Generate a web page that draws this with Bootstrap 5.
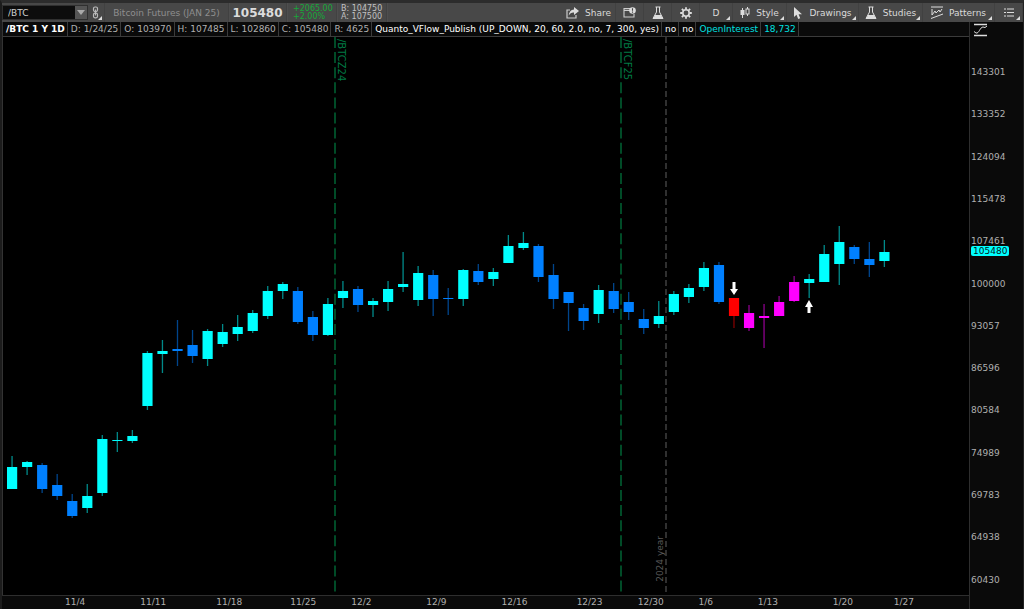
<!DOCTYPE html>
<html lang="en" data-bs-theme="dark">
<head>
<meta charset="utf-8">
<meta name="viewport" content="width=device-width, initial-scale=1">
<title>/BTC chart</title>
<link href="https://cdn.jsdelivr.net/npm/bootstrap@5.3.0/dist/css/bootstrap.min.css" rel="stylesheet">
<style>
body{background:#0a0a0a;color:#b0b0b0;font-family:"DejaVu Sans",sans-serif;font-size:9px;line-height:12px}
.app-shell{border-top:3px solid #2c2c2c;border-left:2px solid #1c1c1c;border-right:1px solid #222}
.tool-bar{height:19px;background:#484848}
.tool-cell{border-right:1px solid #414141;box-shadow:1px 0 0 #4e4e4e;height:19px}
.symbol-box{width:86px;height:15px;background:#0d0d0d;border:1px solid #303030}
.symbol-box .form-control{font-size:9px;line-height:12px;color:#d0d0d0;border-radius:0;min-height:0;padding:0 5px}
.drop-btn{width:14px;background:#555;border:0;padding:0}
.name-cell{width:124px;color:#8e8e8e}
.last-cell{width:58px;font-size:12px;color:#dcdcdc}
.chg-cell{width:50px;font-size:8px;line-height:8px;color:#16a839;padding-left:6px}
.ba-cell{width:50px;font-size:8px;line-height:8px;color:#c0c0c0}
.tool-btn{height:19px;border:0;border-right:1px solid #414141;border-radius:0;background:#484848;color:#dadada;font-size:9px;line-height:12px;padding:0;position:relative;gap:6px}
.tool-btn:hover{background:#555;color:#fff}
.link-btn{width:17px}
.has-menu::after{content:"";position:absolute;right:2px;bottom:2px;border-left:4px solid transparent;border-bottom:4px solid #ddd}
.w-icon{width:28px}.w-mid{width:54px}.w-day{width:33px}.w-wide{width:72px}.w-study{width:64px}
.info-row{height:15px;border-bottom:1px solid #3b3b3b;border-left:1px solid #333}
.info-row span{padding:0 2px 0 3px;line-height:15px;border-right:1px solid #3b3b3b;white-space:nowrap;height:14px}
.price-side{width:54px;border-left:1px solid #2e2e2e}
.scale-btn{padding:1px 4px}
.plot{background:#000;border-left:1px solid #333}
.date-row{height:14px;border-top:1px solid #2e2e2e}
.tick-x{position:absolute;top:0;transform:translateX(-50%)}
.tick-y{position:absolute;left:1px;transform:translateY(-50%)}
.last-tag{background:#0ff;color:#042020;padding:0 2px;border-radius:2px;line-height:10px;z-index:1}
.mark-label{position:absolute;writing-mode:vertical-rl;line-height:12px}
.expiry{color:#007a44;top:2px;font-size:10px}
.year-label{color:#585858;bottom:13px;transform:translateX(-100%) rotate(180deg)}
.cy{color:#00e0e0}
</style>
<script src="https://cdn.jsdelivr.net/npm/bootstrap@5.3.0/dist/js/bootstrap.bundle.min.js"></script>
</head>
<body>
<div class="app-shell d-flex flex-column vh-100 overflow-hidden">
  <header class="tool-bar d-flex align-items-center flex-shrink-0">
    <div class="symbol-box d-flex">
      <input class="form-control border-0 bg-transparent" aria-label="Symbol" value="/BTC">
      <button class="drop-btn d-flex align-items-center justify-content-center" aria-label="Symbol list"><svg width="8" height="5"><path d="M0 0h8L4 5z" fill="#aaa"/></svg></button>
    </div>
    <button class="tool-btn link-btn has-menu d-flex align-items-center justify-content-center" aria-label="Link color">
      <svg width="8" height="13" viewBox="0 0 8 13" fill="none" stroke="#bbb" stroke-width="1.2"><rect x="1.5" y="1" width="4" height="4.6" rx="1.5"/><rect x="1.5" y="7.2" width="4" height="4.6" rx="1.5"/><path d="M3.5 3.5v6"/></svg>
    </button>
    <div class="tool-cell name-cell d-flex align-items-center justify-content-center">Bitcoin Futures (JAN 25)</div>
    <div class="tool-cell last-cell d-flex align-items-center justify-content-center fw-bold">105480</div>
    <div class="tool-cell chg-cell d-flex flex-column justify-content-center"><span>+2065.00</span><span>+2.00%</span></div>
    <div class="tool-cell ba-cell d-flex flex-column justify-content-center ps-1 text-nowrap"><span>B: 104750</span><span>A: 107500</span></div>
    <nav class="d-flex ms-auto" aria-label="Chart tools">
      <button class="tool-btn w-mid d-flex align-items-center justify-content-center"><svg width="13" height="12" viewBox="0 0 13 12"><path d="M4 3H1v8h9V8" fill="none" stroke="#ccc" stroke-width="1.2"/><path d="M8 0l5 4-5 4V5.600C5.500 5.400 4 6.500 2.800 8.500 3 5 5 2.600 8 2.400z" fill="#ddd"/></svg>Share</button>
      <button class="tool-btn w-icon d-flex align-items-center justify-content-center" aria-label="Calendar"><svg width="13" height="11" viewBox="0 0 13 11"><path d="M7 1.600H1v8.400h10V7" fill="none" stroke="#ccc" stroke-width="1.100"/><path d="M1 3.500h6" stroke="#ccc"/><circle cx="9.500" cy="3.500" r="3.300" fill="#ddd"/><path d="M9.500 1.300v2.500M9.500 4.600v1.200" stroke="#444" stroke-width="1.100"/></svg></button>
      <button class="tool-btn w-icon d-flex align-items-center justify-content-center" aria-label="Lab"><svg width="12" height="14" viewBox="0 0 12 14"><path d="M3.500 1h5M4.500 1v5L1 12.500h10L7.500 6V1" fill="none" stroke="#ddd"/><path d="M3 9h6l2 4H1z" fill="#ddd"/></svg></button>
      <button class="tool-btn w-icon d-flex align-items-center justify-content-center" aria-label="Settings"><svg width="12" height="12" viewBox="-6 -6 12 12"><circle r="3.200" fill="none" stroke="#ddd" stroke-width="1.600"/><path d="M0-5.800v2M0 3.800v2M-5.800 0h2M3.800 0h2M-4.100-4.100l1.400 1.400M2.700 2.700l1.400 1.400M-4.100 4.100l1.400-1.400M2.700-2.700l1.400-1.400" stroke="#ddd" stroke-width="1.800"/></svg></button>
      <button class="tool-btn w-day has-menu">D</button>
      <button class="tool-btn w-mid has-menu d-flex align-items-center justify-content-center"><svg width="10" height="12" viewBox="0 0 10 12"><path d="M2.500 1v10M7.500 0v9" stroke="#ddd"/><rect x=".5" y="3" width="4" height="5" fill="#ddd"/><rect x="6" y="2" width="3" height="5" fill="#484848" stroke="#ddd"/></svg>Style</button>
      <button class="tool-btn w-wide has-menu d-flex align-items-center justify-content-center"><svg width="10" height="12" viewBox="0 0 10 12"><path d="M1 0v10l2.500-2.300L5.200 12l2-.8L5.600 7.200H9z" fill="#ddd"/></svg>Drawings</button>
      <button class="tool-btn w-study has-menu d-flex align-items-center justify-content-center"><svg width="12" height="14" viewBox="0 0 12 14"><path d="M3.500 1h5M4.500 1v5L1 12.500h10L7.500 6V1" fill="none" stroke="#ddd"/><path d="M3 9h6l2 4H1z" fill="#ddd"/></svg>Studies</button>
      <button class="tool-btn w-wide has-menu d-flex align-items-center justify-content-center"><svg width="12" height="13" viewBox="0 0 12 13" fill="none" stroke="#ddd"><path d="M0 1h12M0 12.500L12 8M1 3v6l3-4 1 2 3-3 1 2 2-3"/></svg>Patterns</button>
      <button class="tool-btn w-icon has-menu d-flex align-items-center justify-content-center" aria-label="Menu"><svg width="10" height="9" viewBox="0 0 10 9"><path d="M0 1h2M0 4.500h2M0 8h2M3 1h7M3 4.500h7M3 8h7" stroke="#ddd"/></svg></button>
    </nav>
  </header>
  <main class="d-flex flex-grow-1">
    <div class="d-flex flex-column flex-grow-1">
      <div class="info-row d-flex flex-shrink-0">
        <span class="fw-bold text-white">/BTC 1 Y 1D</span><span>D: 1/24/25</span><span>O: 103970</span><span>H: 107485</span><span>L: 102860</span><span>C: 105480</span><span>R: 4625</span><span class="text-white">Quanto_VFlow_Publish (UP_DOWN, 20, 60, 2.0, no, 7, 300, yes)</span><span class="text-white">no</span><span class="text-white">no</span><span class="cy">OpenInterest</span><span class="cy">18,732</span>
      </div>
      <div class="plot flex-grow-1 position-relative" id="plot">
        <svg id="candles" class="position-absolute w-100 h-100" viewBox="0 0 966 558" preserveAspectRatio="none" role="img" aria-label="Daily candles"></svg>
      </div>
      <div class="date-row position-relative flex-shrink-0" id="dates"></div>
    </div>
    <aside class="price-side d-flex flex-column flex-shrink-0">
      <button class="btn scale-btn border-0 d-flex" aria-label="Fit scale"><svg width="13" height="14" viewBox="0 0 13 14" fill="none" stroke="#ddd"><path d="M0 1.500h13M0 12.500h13" stroke-width="1.500"/><path d="M0 8.500l2 1.500c3 1 4-6 7-6l2 .5 2-1.500"/></svg></button>
      <div class="position-relative flex-grow-1" id="prices"></div>
    </aside>
  </main>
</div>
<script>
const W=966,H=558,FIRST=9,STEP=15.04;
const col={c:['#00ffff','#008a8a'],b:['#0080ff','#00458c'],r:['#ff0000','#800000'],m:['#ff00ff','#8c008c']};
// kind, high, body top, body bottom, low
const bars=[
['c',419,430,452,452],['c',424,425,430,438],['b',426,428,452,456],['b',437,448,459,463],['b',457,464,479,481],
['c',447,459,471,476],['c',398,402,456,459],['c',395,403,404,415],['c',393,399,404,406],['c',314,316,369,373],
['c',303,314,317,336],['b',283,312,314,329],['b',293,308,319,326],['c',292,294,322,329],['c',287,295,307,310],
['c',278,290,297,304],['c',273,276,294,296],['c',249,254,279,282],['c',245,247,254,262],['b',250,254,285,287],
['b',274,280,298,304],['c',261,267,298,299],['c',244,254,261,271],['b',249,252,268,275],['c',261,264,268,280],
['c',244,252,265,274],['c',215,247,250,255],['c',229,236,263,269],['b',233,238,262,279],['b',251,261,262,278],
['c',232,233,262,269],['b',227,234,245,248],['c',231,235,242,249],['c',198,209,226,226],['c',195,206,211,213],
['b',207,209,240,245],['b',227,238,262,272],['b',255,255,266,294],['b',267,271,284,293],['c',248,253,277,286],
['b',246,254,272,276],['b',255,265,275,283],['b',272,282,291,297],['c',264,279,287,291],['c',254,257,275,278],
['c',247,251,260,266],['c',225,231,250,254],['b',225,228,265,267],['r',261,261,279,291],['m',268,276,291,294],
['m',267,279,281,311],['m',259,265,279,279],['m',239,245,264,265],['c',237,242,246,261],['c',208,217,245,245],
['c',189,205,227,248],['b',208,210,222,227],['b',205,222,228,240],['c',203,215,224,230]];
let s='';
const lines=[[332,'#006b38','11 4.1','/BTCZ24'],[618,'#006b38','11 4.1','/BTCF25'],[663,'#444','6 3','']];
lines.forEach(([x,c,d])=>s+=`<path d="M${x} 0V${H}" stroke="${c}" stroke-width="1.4" stroke-dasharray="${d}"/>`);
bars.forEach(([k,h,t,b,l],i)=>{
  const x=FIRST+i*STEP;
  s+=`<rect x="${x-.6}" y="${h}" width="1.3" height="${l-h}" fill="${col[k][1]}"/><rect x="${x-5}" y="${t}" width="10.200" height="${b-t}" fill="${col[k][0]}"/>`;
});
s+='<path d="M729.500 245h3v7h2.500l-4 6-4-6h2.500z" fill="#fff"/><path d="M804.500 276h3v-6h2.500l-4-7-4 7h2.500z" fill="#fff"/>';
document.getElementById('candles').innerHTML=s;
const plot=document.getElementById('plot');
const add=(p,cls,txt,prop,val)=>{const e=document.createElement('span');e.className=cls;e.textContent=txt;e.style[prop]=val+'%';p.append(e)};
lines.forEach(l=>l[3]&&add(plot,'mark-label expiry',l[3],'left',l[0]/W*100));
add(plot,'mark-label year-label','2024 year','left',663/W*100);
const dates=document.getElementById('dates');
[['11/4',75],['11/11',153],['11/18',229],['11/25',303],['12/2',361],['12/9',436],['12/16',514],['12/23',589],['12/30',650],['1/6',705],['1/13',767],['1/20',842],['1/27',903]].forEach(([t,x])=>add(dates,'tick-x',t,'left',(x-2)/W*100));
const prices=document.getElementById('prices'),AH=571;
[143301,133352,124094,115478,107461,100000,93057,86596,80584,74989,69783,64938,60430].forEach((p,i)=>add(prices,'tick-y',p,'top',(34+i*42.3)/AH*100));
add(prices,'tick-y last-tag','105480','top',213/AH*100);
</script>
</body>
</html>
